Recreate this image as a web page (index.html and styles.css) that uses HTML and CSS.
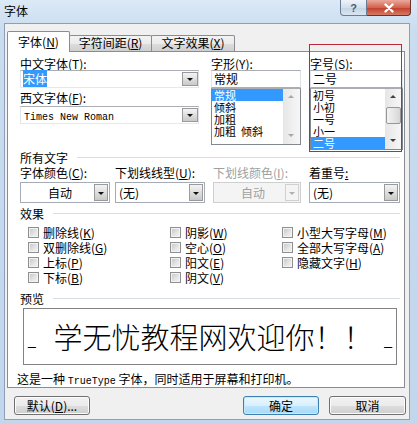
FILE: index.html
```html
<!DOCTYPE html>
<html lang="zh-CN">
<head>
    <meta charset="UTF-8">
    <meta name="viewport" content="width=device-width, initial-scale=1.0">
    <title>字体</title>
    <link rel="stylesheet" href="styles.css">
</head>
<body>
<div class="window">
    <div class="titlebar">
        <span class="title">字体</span>
        <div class="caption">
            <span class="cap-help">?</span>
            <span class="cap-close">
                <svg width="14" height="10" viewBox="0 0 14 10"><path d="M3.5 1.5 L10.5 8.5 M10.5 1.5 L3.5 8.5" stroke="#fff" stroke-width="2.4" stroke-linecap="round"/></svg>
            </span>
        </div>
    </div>

    <div class="client">
        <div class="tabs">
            <div class="tab active">字体(<u>N</u>)</div>
            <div class="tab">字符间距(<u>R</u>)</div>
            <div class="tab">文字效果(<u>X</u>)</div>
        </div>

        <div class="panel">
            <!-- fonts / style / size -->
            <div class="fonts">
                <div class="col">
                    <label>中文字体(<u>T</u>):</label>
                    <div class="combo"><span class="sel">宋体</span><span class="drop"></span></div>
                    <label class="second">西文字体(<u>F</u>):</label>
                    <div class="combo second-box"><span class="en">Times New Roman</span><span class="drop"></span></div>
                </div>
                <div class="col">
                    <label>字形(<u>Y</u>):</label>
                    <div class="textbox">常规</div>
                    <div class="list style-list">
                        <ul>
                            <li class="selected">常规</li>
                            <li>倾斜</li>
                            <li>加粗</li>
                            <li>加粗&nbsp; 倾斜</li>
                        </ul>
                        <div class="vscroll off"><span class="arr up"></span><span class="track"></span><span class="arr down"></span></div>
                    </div>
                </div>
                <div class="col">
                    <label>字号(<u>S</u>):</label>
                    <div class="textbox">二号</div>
                    <div class="list size-list">
                        <ul>
                            <li>初号</li>
                            <li>小初</li>
                            <li>一号</li>
                            <li>小一</li>
                            <li class="selected">二号</li>
                        </ul>
                        <div class="vscroll"><span class="arr up"></span><span class="track"><span class="thumb"></span></span><span class="arr down"></span></div>
                    </div>
                </div>
            </div>

            <div class="group">所有文字<span class="rule"></span></div>
            <div class="colors">
                <div class="cell">
                    <label>字体颜色(<u>C</u>):</label>
                    <div class="dropdown center"><span>自动</span><span class="drop"></span></div>
                </div>
                <div class="cell">
                    <label>下划线线型(<u>U</u>):</label>
                    <div class="dropdown"><span>(无)</span><span class="drop"></span></div>
                </div>
                <div class="cell">
                    <label class="disabled">下划线颜色(<u>I</u>):</label>
                    <div class="dropdown center disabled"><span>自动</span><span class="drop"></span></div>
                </div>
                <div class="cell">
                    <label>着重号<u>:</u></label>
                    <div class="dropdown"><span>(无)</span><span class="drop"></span></div>
                </div>
            </div>

            <div class="group effects-title">效果<span class="rule"></span></div>
            <div class="effects">
                <div class="check"><span class="box"></span>删除线(<u>K</u>)</div>
                <div class="check"><span class="box"></span>双删除线(<u>G</u>)</div>
                <div class="check"><span class="box"></span>上标(<u>P</u>)</div>
                <div class="check"><span class="box"></span>下标(<u>B</u>)</div>
                <div class="check"><span class="box"></span>阴影(<u>W</u>)</div>
                <div class="check"><span class="box"></span>空心(<u>O</u>)</div>
                <div class="check"><span class="box"></span>阳文(<u>E</u>)</div>
                <div class="check"><span class="box"></span>阴文(<u>V</u>)</div>
                <div class="check"><span class="box"></span>小型大写字母(<u>M</u>)</div>
                <div class="check"><span class="box"></span>全部大写字母(<u>A</u>)</div>
                <div class="check"><span class="box"></span>隐藏文字(<u>H</u>)</div>
            </div>

            <div class="group preview-title">预览<span class="rule"></span></div>
            <div class="preview">
                <span class="edge">_</span>
                <span class="sample">学无忧教程网欢迎你！！</span>
                <span class="edge">_</span>
            </div>
            <p class="info">这是一种 <span class="en">TrueType</span> 字体，同时适用于屏幕和打印机。</p>
        </div>

        <div class="buttons">
            <button class="btn">默认(<u>D</u>)...</button>
            <button class="btn default">确定</button>
            <button class="btn">取消</button>
        </div>
    </div>

    <div class="mark"></div>
</div>
</body>
</html>
```

FILE: styles.css
```css
/* Global */
html, body {
    margin: 0;
    padding: 0;
}

body {
    width: 417px;
    height: 424px;
    overflow: hidden;
    font-family: "Noto Sans CJK SC", sans-serif;
    font-size: 12px;
    color: #000;
}

u {
    text-decoration: underline;
    text-underline-offset: 1px;
}

.en {
    font-family: "Liberation Mono", monospace;
    font-size: 10px;
}

/* Window frame */
.window {
    position: relative;
    width: 417px;
    height: 424px;
    background: linear-gradient(to bottom, #dce9f6 0%, #c9dcf0 30px, #c2d6ec 100%);
}

.titlebar {
    display: flex;
    align-items: flex-start;
    height: 23px;
}

.title {
    padding: 3px 0 0 4px;
    font-size: 12px;
    line-height: 16px;
}

.caption {
    display: flex;
    margin-left: auto;
    margin-right: 6px;
}

.cap-help,
.cap-close {
    display: flex;
    align-items: center;
    justify-content: center;
    height: 16px;
    box-sizing: border-box;
    border: 1px solid #6a7d95;
    border-top: none;
}

.cap-help {
    width: 27px;
    border-radius: 0 0 0 4px;
    background: linear-gradient(to bottom, #eef3f9, #d3dfec 50%, #c4d3e4 51%, #d9e5f1);
    color: #4d5d73;
    font-family: "Liberation Sans", sans-serif;
    font-weight: bold;
    font-size: 11px;
}

.cap-close {
    width: 44px;
    border-left: none;
    border-color: #6e302a;
    border-radius: 0 0 4px 0;
    background: linear-gradient(to bottom, #e9a99c, #d5624f 50%, #c13d27 51%, #d57a66);
}

/* Client area */
.client {
    width: 406px;
    height: 397px;
    margin-left: 4px;
    box-sizing: border-box;
    border: 1px solid #8d9fb6;
    background-color: #f0f0f0;
    padding: 7px 0 0 2px;
}

/* Tabs */
.tabs {
    display: flex;
    align-items: flex-end;
    height: 20px;
    position: relative;
    z-index: 2;
}

.tab {
    box-sizing: border-box;
    height: 16px;
    line-height: 14px;
    padding: 0;
    border: 1px solid #898c95;
    border-bottom: none;
    margin-left: -1px;
    background: linear-gradient(to bottom, #f3f3f3, #ebebeb 50%, #dddddd 51%, #cfcfcf);
    border-radius: 2px 2px 0 0;
    text-align: center;
    white-space: nowrap;
}

.tab:nth-child(2) {
    width: 83px;
}

.tab:nth-child(3) {
    width: 84px;
}

.tab.active {
    width: 63px;
    height: 21px;
    margin-left: 0;
    margin-bottom: -1px;
    line-height: 20px;
    background: #fff;
}

/* Tab panel */
.panel {
    width: 398px;
    height: 337px;
    box-sizing: border-box;
    border: 1px solid #898c95;
    background-color: #fff;
    padding: 5px 4px 0 12px;
}

label {
    display: block;
    height: 13px;
    line-height: 13px;
    white-space: nowrap;
}

label.disabled {
    color: #a0a0a0;
}

/* Top section */
.fonts {
    display: grid;
    grid-template-columns: 179px 90px 90px;
    column-gap: 12px;
    height: 93px;
}

.fonts .col:nth-child(3) {
    margin-left: -3px;
}

.combo,
.textbox {
    position: relative;
    box-sizing: border-box;
    height: 18px;
    border: 1px solid #abadb3;
    border-color: #abadb3 #dbdfe6 #e3e9ef #e2e3ea;
    line-height: 16px;
    padding-left: 2px;
    white-space: nowrap;
}

.combo .sel {
    background-color: #3399ff;
    color: #fff;
}

.combo .en {
    padding-left: 1px;
}

label.second {
    margin-top: 3px;
}

.combo.second-box {
    margin-top: 2px;
}

.drop {
    position: absolute;
    right: 0;
    top: 1px;
    width: 16px;
    height: 14px;
    box-sizing: border-box;
    border: 1px solid #9a9a9a;
    background: linear-gradient(to bottom, #f4f4f4, #dcdcdc 55%, #c9c9c9);
}

.drop::after {
    content: "";
    position: absolute;
    left: 50%;
    top: 50%;
    margin: -1px 0 0 -3px;
    border-left: 3px solid transparent;
    border-right: 3px solid transparent;
    border-top: 3px solid #111;
}

/* List boxes */
.textbox {
    border-bottom-color: #abadb3;
}

.list {
    display: flex;
    box-sizing: border-box;
    border: 1px solid #828790;
    border-top-color: #abadb3;
    height: 57px;
    margin-top: 0;
}

.list.size-list {
    height: 62px;
}

.list ul {
    flex: 1;
    margin: 0;
    padding: 0;
    list-style: none;
}

.list li {
    height: 12px;
    font-size: 11px;
    line-height: 12px;
    padding-left: 2px;
    white-space: nowrap;
}

.list li.selected {
    background-color: #3399ff;
    color: #fff;
}

.vscroll {
    display: flex;
    flex-direction: column;
    width: 17px;
    background: linear-gradient(to right, #e6e6e6, #f7f7f7);
}

.arr {
    position: relative;
    height: 16px;
}

.arr::after {
    content: "";
    position: absolute;
    left: 5px;
    top: 6px;
    border-left: 3px solid transparent;
    border-right: 3px solid transparent;
}

.arr.up::after {
    border-bottom: 3px solid #404040;
}

.arr.down::after {
    border-top: 3px solid #404040;
}

.vscroll.off .arr.up::after {
    border-bottom-color: #a8a8a8;
}

.vscroll.off .arr.down::after {
    border-top-color: #a8a8a8;
}

.track {
    flex: 1;
}

.thumb {
    display: block;
    width: 15px;
    height: 17px;
    margin: 2px 0 0 1px;
    box-sizing: border-box;
    border: 1px solid #979797;
    border-radius: 2px;
    background: linear-gradient(to right, #f3f3f3, #e6e6e6 50%, #d6d6d6);
}

/* Group headings */
.group {
    display: flex;
    align-items: center;
    height: 13px;
    line-height: 13px;
    margin-top: 1px;
}

.rule {
    flex: 1;
    height: 1px;
    margin-left: 9px;
    background-color: #d5dfe5;
}

.effects-title {
    margin-top: 4px;
}

.preview-title {
    margin-top: 7px;
}

/* Colour / underline dropdowns */
.colors {
    display: grid;
    grid-template-columns: 90px 90px 90px 90px;
    column-gap: 5px;
    margin-top: 2px;
}

.colors .cell:nth-child(3) {
    margin-left: 3px;
    width: 88px;
}

.colors .cell:nth-child(4) {
    margin-left: 4px;
    width: 91px;
}

.dropdown {
    position: relative;
    box-sizing: border-box;
    height: 21px;
    margin-top: 3px;
    border: 1px solid #a5acb5;
    line-height: 19px;
    padding-left: 3px;
    white-space: nowrap;
}

.dropdown.center span:first-child {
    display: block;
    width: 72px;
    text-align: center;
}

.dropdown .drop {
    top: 1px;
    right: 1px;
    width: 14px;
    height: 17px;
}

.dropdown.disabled {
    background-color: #f4f4f4;
    border-color: #cfcfcf;
    color: #a0a0a0;
}

.dropdown.disabled .drop {
    border-color: #d0d0d0;
    background: #f4f4f4;
}

.dropdown.disabled .drop::after {
    border-top-color: #b0b0b0;
}

/* Effects */
.effects {
    display: grid;
    grid-template-columns: 142px 112px 1fr;
    grid-template-rows: repeat(4, 15px);
    grid-auto-flow: column;
    margin: 5px 0 0 8px;
}

.check {
    display: flex;
    align-items: center;
    line-height: 15px;
    white-space: nowrap;
}

.box {
    width: 11px;
    height: 11px;
    box-sizing: border-box;
    margin-right: 4px;
    border: 1px solid #8e8f8f;
    background: linear-gradient(135deg, #c4c4c4, #e6e6e6 60%, #f4f4f4);
    box-shadow: inset 0 0 0 1px #f2f2f2;
}

/* Preview */
.preview {
    display: flex;
    align-items: center;
    justify-content: space-between;
    height: 57px;
    margin: 3px 3px 0 3px;
    padding: 0 4px;
    box-sizing: border-box;
    border: 1px solid #828282;
}

.sample {
    font-size: 29px;
    font-weight: 300;
    line-height: 29px;
    margin-left: 6px;
}

.edge {
    align-self: flex-end;
    margin-bottom: 17px;
    font-family: "Liberation Sans", sans-serif;
    font-size: 14px;
    line-height: 14px;
}

.info {
    margin: 7px 0 0 -3px;
    height: 13px;
    line-height: 13px;
    white-space: nowrap;
}

/* Buttons */
.buttons {
    display: flex;
    margin-top: 8px;
    padding: 0 3px 0 7px;
}

.btn {
    width: 76px;
    height: 19px;
    padding: 0;
    border: 1px solid #707070;
    border-radius: 3px;
    background: linear-gradient(to bottom, #f2f2f2, #ebebeb 50%, #dddddd 51%, #cfcfcf);
    box-shadow: inset 0 0 0 1px #fbfbfb;
    font-family: "Noto Sans CJK SC", sans-serif;
    font-size: 12px;
    line-height: 15px;
    color: #000;
}

.btn.default {
    margin-left: auto;
    border-color: #3c7fb1;
    background: linear-gradient(to bottom, #eaf6fd, #d9f0fc 50%, #bee6fd 51%, #a7d9f5);
    box-shadow: inset 0 0 0 1px #c4ecfd;
}

.btn:last-child {
    margin-left: 10px;
    width: 77px;
}

/* red annotation around the size column */
.mark {
    position: absolute;
    left: 309px;
    top: 44px;
    width: 93px;
    height: 108px;
    border: 1px solid #c0283a;
    box-sizing: border-box;
}
```
